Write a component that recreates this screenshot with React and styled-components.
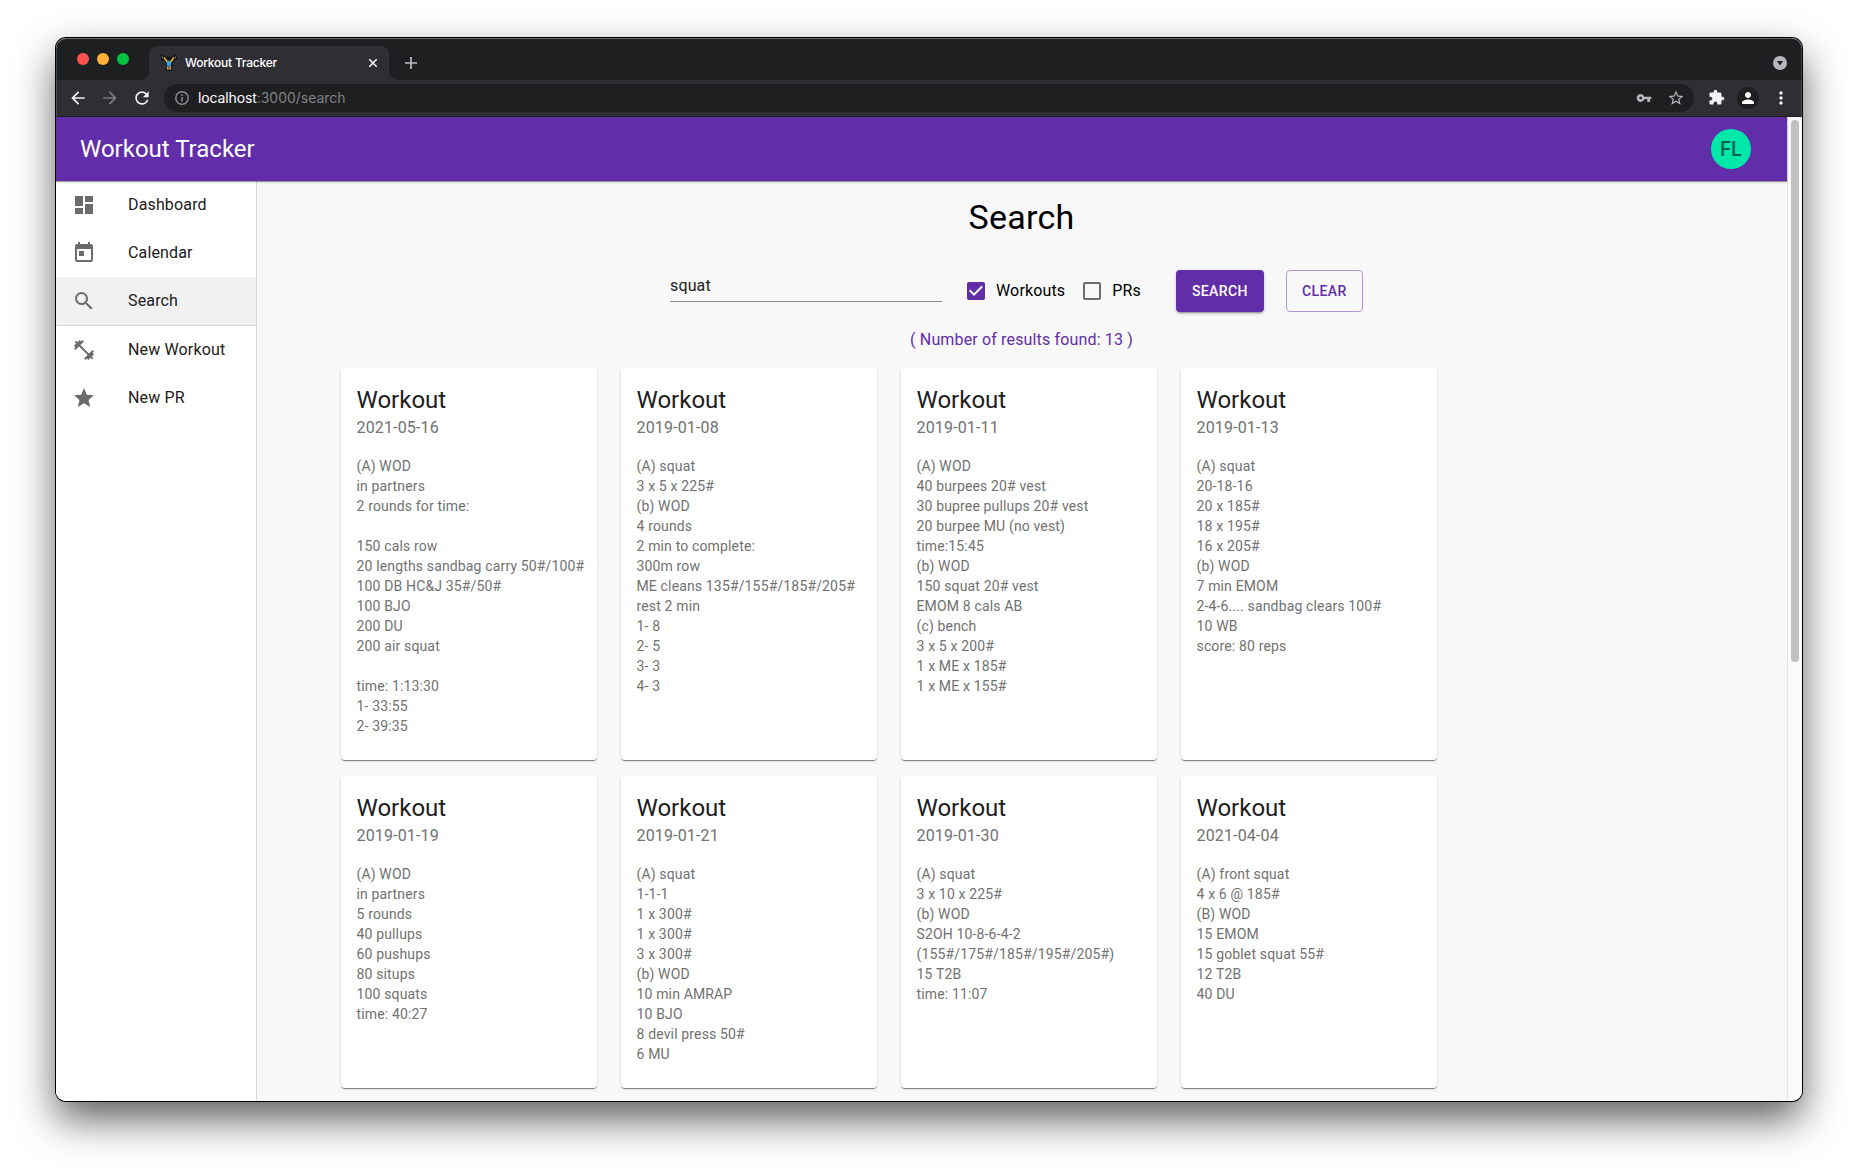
import React from "react";
import styled, { createGlobalStyle } from "styled-components";
import {
  MdDashboard,
  MdToday,
  MdSearch,
  MdFitnessCenter,
  MdStar,
  MdStarBorder,
  MdVpnKey,
  MdExtension,
  MdPerson,
  MdMoreVert,
  MdArrowBack,
  MdArrowForward,
  MdRefresh,
  MdCheckBox,
  MdCheckBoxOutlineBlank,
} from "react-icons/md";

const PURPLE = "#612da9";

const GlobalStyle = createGlobalStyle`
  *, *::before, *::after { box-sizing: border-box; }
  html, body { margin: 0; background: #fff; overflow: hidden; }
  body { font-family: Roboto, "Liberation Sans", sans-serif; -webkit-font-smoothing: antialiased; }
`;

const Desktop = styled.div`
  width: 1858px;
  height: 1175px;
  padding: 38px 56px 74px;
  background: #fff;
  overflow: hidden;
`;

const Window = styled.div`
  position: relative;
  display: flex;
  flex-direction: column;
  height: 1063px;
  border-radius: 10px;
  box-shadow: 0 0 0 1px #000, 0 18px 40px rgba(0, 0, 0, 0.64);
  &::after {
    content: "";
    position: absolute;
    inset: 0;
    border-radius: 10px;
    box-shadow: inset 0 1px 0 rgba(255, 255, 255, 0.2), inset 0 0 0 1px rgba(255, 255, 255, 0.16);
    pointer-events: none;
  }
`;

/* browser chrome */

const TabStrip = styled.div`
  display: flex;
  height: 42px;
  padding: 0 15px 0 21px;
  background: #1e1f21;
  border-radius: 10px 10px 0 0;
  font-family: Inter, "Liberation Sans", sans-serif;
`;

const Lights = styled.div`
  display: flex;
  gap: 8px;
  padding-top: 15px;
  width: 72px;
`;

const Light = styled.span`
  width: 12px;
  height: 12px;
  border-radius: 50%;
  background: ${(p) => p.$color};
`;

const Tab = styled.div`
  position: relative;
  display: flex;
  align-items: center;
  width: 240px;
  height: 34px;
  margin-top: 8px;
  padding: 0 10px 0 12px;
  background: #2f2e33;
  border-radius: 8px 8px 0 0;
  color: #fff;
  &::before,
  &::after {
    content: "";
    position: absolute;
    bottom: 0;
    width: 8px;
    height: 8px;
  }
  &::before {
    left: -8px;
    background: radial-gradient(circle at 0 0, transparent 7.5px, #2f2e33 8px);
  }
  &::after {
    right: -8px;
    background: radial-gradient(circle at 100% 0, transparent 7.5px, #2f2e33 8px);
  }
`;

const TabTitle = styled.span`
  flex: 1;
  margin-left: 8px;
  font-size: 12px;
  font-weight: 500;
  line-height: 16px;
  letter-spacing: -0.22px;
`;

const TabClose = styled.svg`
  width: 12px;
  height: 12px;
`;

const NewTab = styled.svg`
  width: 14px;
  height: 14px;
  margin: 18px 0 0 15px;
`;

const TabMenu = styled.svg`
  width: 14px;
  height: 14px;
  margin: 18px 0 0 auto;
`;

const Toolbar = styled.div`
  display: flex;
  align-items: center;
  height: 37px;
  padding: 0 11.5px 1px 12px;
  background: #2f2e33;
  border-bottom: 1px solid #1f1f22;
  color: #f1f2f4;
  font-family: Inter, "Liberation Sans", sans-serif;
`;

const NavButton = styled.span`
  display: flex;
  margin-right: 12px;
  color: ${(p) => (p.$muted ? "#7c7b80" : "#f1f2f4")};
`;

const Omnibox = styled.div`
  display: flex;
  align-items: center;
  flex: 1;
  height: 28px;
  padding: 0 9px 0 11px;
  background: #1e1f21;
  border-radius: 14px;
  color: #b4b5b8;
`;

const Url = styled.span`
  flex: 1;
  margin-left: 9px;
  font-size: 14px;
  line-height: 20px;
  letter-spacing: -0.03px;
  color: #818285;
`;

const Host = styled.span`
  color: #fff;
  letter-spacing: -0.12px;
`;

const OmniIcon = styled.span`
  display: flex;
  margin-left: ${(p) => p.$gap}px;
`;

const Extensions = styled.span`
  display: flex;
  margin: 0 12.5px 0 13.5px;
`;

const Profile = styled.span`
  display: flex;
  align-items: center;
  justify-content: center;
  width: 22px;
  height: 22px;
  border-radius: 50%;
  background: #1e1f21;
  color: #fff;
`;

const Kebab = styled.span`
  display: flex;
  margin-left: 11.5px;
`;

/* page */

const Viewport = styled.div`
  display: flex;
  flex: 1;
  min-height: 0;
  overflow: hidden;
  border-radius: 0 0 10px 10px;
`;

const Page = styled.div`
  display: flex;
  flex-direction: column;
  width: 1731px;
  background: #f8f8f8;
`;

const ScrollTrack = styled.div`
  width: 15px;
  padding: 3px 3px;
  background: #fafafa;
  border-left: 1px solid #e4e4e4;
`;

const ScrollThumb = styled.div`
  width: 8px;
  height: 542px;
  border-radius: 4px;
  background: #c1c1c1;
`;

const AppBar = styled.header`
  position: relative;
  z-index: 1;
  display: flex;
  align-items: center;
  justify-content: space-between;
  height: 64px;
  flex: none;
  padding: 0 36px 0 24px;
  background: ${PURPLE};
  box-shadow: 0 1px 1px rgba(0, 0, 0, 0.32), 0 1px 3px rgba(0, 0, 0, 0.12);
  color: #fff;
`;

const Brand = styled.div`
  font-size: 24px;
  line-height: 32px;
`;

const Avatar = styled.div`
  display: flex;
  align-items: center;
  justify-content: center;
  width: 40px;
  height: 40px;
  border-radius: 50%;
  background: #00e7aa;
  color: #036350;
  font-size: 20px;
  font-weight: 500;
  line-height: 20px;
`;

const Body = styled.div`
  display: flex;
  flex: 1;
  min-height: 0;
`;

const Sidebar = styled.nav`
  width: 201px;
  flex: none;
  background: #fff;
  border-right: 1px solid #d9d9d9;
`;

const NavItem = styled.div`
  display: flex;
  align-items: center;
  gap: 32px;
  height: ${(p) => (p.$divider ? 49 : 48)}px;
  padding: 0 16px;
  background: ${(p) => (p.$active ? "#f1f1f1" : "transparent")};
  border-bottom: ${(p) => (p.$divider ? "1px solid #d9d9d9" : "none")};
  color: #202020;
  font-size: 16px;
  line-height: 24px;
  letter-spacing: 0.00938em;
  svg {
    color: #6b6b6b;
  }
`;

const Main = styled.main`
  flex: 1;
  padding: 15px 0 0;
  overflow: hidden;
`;

const Heading = styled.h1`
  margin: 0;
  padding-right: 1px;
  text-align: center;
  font-size: 34px;
  font-weight: 400;
  line-height: 42px;
  letter-spacing: 0.00735em;
  color: #000;
`;

const SearchForm = styled.div`
  display: flex;
  align-items: center;
  height: 42px;
  margin-top: 32px;
  padding-left: 413px;
`;

const SearchField = styled.div`
  align-self: flex-start;
  width: 272px;
  height: 32px;
  margin-right: 22px;
  padding-top: 6px;
  border-bottom: 1px solid #8c8c8c;
  color: #202020;
  font-size: 16px;
  line-height: 19px;
  letter-spacing: 0.00938em;
`;

const CheckLabel = styled.label`
  display: flex;
  align-items: center;
  gap: 8px;
  margin-right: ${(p) => p.$gap}px;
  font-size: 16px;
  line-height: 24px;
  letter-spacing: 0.00938em;
  color: #000;
  svg {
    color: ${(p) => (p.$checked ? PURPLE : "#6d6d6d")};
  }
`;

const Button = styled.button`
  width: ${(p) => p.$width}px;
  height: 42px;
  margin: 0 22px 0 0;
  padding: 0;
  border: ${(p) => (p.$outlined ? "1px solid #b096d5" : "none")};
  border-radius: 4px;
  background: ${(p) => (p.$outlined ? "transparent" : PURPLE)};
  box-shadow: ${(p) =>
    p.$outlined
      ? "none"
      : "0 3px 1px -2px rgba(0,0,0,.2), 0 2px 2px 0 rgba(0,0,0,.14), 0 1px 5px 0 rgba(0,0,0,.12)"};
  color: ${(p) => (p.$outlined ? PURPLE : "#fff")};
  font-family: inherit;
  font-size: 14px;
  font-weight: 500;
  line-height: 24px;
  letter-spacing: 0.02857em;
`;

const ResultCount = styled.p`
  margin: 16px 0 0;
  padding-right: 1px;
  text-align: center;
  font-size: 16px;
  line-height: 24px;
  letter-spacing: 0.00938em;
  color: ${PURPLE};
`;

const CardGrid = styled.div`
  display: grid;
  grid-template-columns: repeat(4, 256px);
  gap: 16px 24px;
  margin: 16px 0 0 84px;
`;

const Card = styled.article`
  padding: 16px 0 24px 15.5px;
  border-radius: 4px;
  background: #fff;
  box-shadow: 0 2px 1px -1px rgba(0, 0, 0, 0.3), 0 1px 1px 0 rgba(0, 0, 0, 0.2),
    0 1px 3px 0 rgba(0, 0, 0, 0.12);
`;

const CardTitle = styled.h2`
  margin: 0;
  font-size: 24px;
  font-weight: 400;
  line-height: 32px;
  color: #202020;
`;

const CardDate = styled.div`
  font-size: 16px;
  line-height: 24px;
  letter-spacing: 0.00938em;
  color: #717171;
`;

const CardText = styled.div`
  margin-top: 16px;
  font-size: 14px;
  line-height: 20px;
  letter-spacing: 0.01071em;
  white-space: pre;
  color: #717171;
`;

const workouts = [
  {
    date: "2021-05-16",
    text: "(A) WOD\nin partners\n2 rounds for time:\n\n150 cals row\n20 lengths sandbag carry 50#/100#\n100 DB HC&J 35#/50#\n100 BJO\n200 DU\n200 air squat\n\ntime: 1:13:30\n1- 33:55\n2- 39:35",
  },
  {
    date: "2019-01-08",
    text: "(A) squat\n3 x 5 x 225#\n(b) WOD\n4 rounds\n2 min to complete:\n300m row\nME cleans 135#/155#/185#/205#\nrest 2 min\n1- 8\n2- 5\n3- 3\n4- 3",
  },
  {
    date: "2019-01-11",
    text: "(A) WOD\n40 burpees 20# vest\n30 bupree pullups 20# vest\n20 burpee MU (no vest)\ntime:15:45\n(b) WOD\n150 squat 20# vest\nEMOM 8 cals AB\n(c) bench\n3 x 5 x 200#\n1 x ME x 185#\n1 x ME x 155#",
  },
  {
    date: "2019-01-13",
    text: "(A) squat\n20-18-16\n20 x 185#\n18 x 195#\n16 x 205#\n(b) WOD\n7 min EMOM\n2-4-6.... sandbag clears 100#\n10 WB\nscore: 80 reps",
  },
  {
    date: "2019-01-19",
    text: "(A) WOD\nin partners\n5 rounds\n40 pullups\n60 pushups\n80 situps\n100 squats\ntime: 40:27",
  },
  {
    date: "2019-01-21",
    text: "(A) squat\n1-1-1\n1 x 300#\n1 x 300#\n3 x 300#\n(b) WOD\n10 min AMRAP\n10 BJO\n8 devil press 50#\n6 MU",
  },
  {
    date: "2019-01-30",
    text: "(A) squat\n3 x 10 x 225#\n(b) WOD\nS2OH 10-8-6-4-2\n(155#/175#/185#/195#/205#)\n15 T2B\ntime: 11:07",
  },
  {
    date: "2021-04-04",
    text: "(A) front squat\n4 x 6 @ 185#\n(B) WOD\n15 EMOM\n15 goblet squat 55#\n12 T2B\n40 DU",
  },
];

const navItems = [
  { label: "Dashboard", Icon: MdDashboard },
  { label: "Calendar", Icon: MdToday },
  { label: "Search", Icon: MdSearch, active: true, divider: true },
  { label: "New Workout", Icon: MdFitnessCenter },
  { label: "New PR", Icon: MdStar },
];

function LifterIcon() {
  return (
    <svg width="16" height="16" viewBox="0 0 16 16">
      <path d="M1 2.2h14" stroke="#111" strokeWidth="1" />
      <rect x="0" y="0.2" width="3" height="4.6" rx="1" fill="#0b0b0c" />
      <rect x="13" y="0.2" width="3" height="4.6" rx="1" fill="#0b0b0c" />
      <path d="M1 1.2l1 2.6M15 1.2l-1 2.6" stroke="#66686c" strokeWidth="1.1" />
      <path d="M2.8 2.5L6 6.8h4l3.2-4.3" fill="none" stroke="#0b0b0c" strokeWidth="3.2" />
      <rect x="4.7" y="5.5" width="6.6" height="10.3" rx="0.8" fill="#0b0b0c" />
      <path d="M3 2.6L6.1 6.6h3.8L13 2.6" fill="none" stroke="#e9b43c" strokeWidth="1.7" />
      <circle cx="8" cy="3.6" r="1.8" fill="#0b0b0c" />
      <rect x="5.8" y="6.2" width="4.4" height="4.6" fill="#35a7dc" />
      <path d="M5.8 11h4.4v3.8H8.3V12H7.7v2.8H5.8z" fill="#c99562" />
      <path d="M5.8 10.2h4.4v1.7H5.8z" fill="#4676b8" />
    </svg>
  );
}

function InfoIcon() {
  return (
    <svg width="14" height="14" viewBox="0 0 14 14" fill="none">
      <circle cx="7" cy="7" r="6.2" stroke="#8d8f94" strokeWidth="1.4" />
      <path d="M7 6.2v4.2M7 3.6v1.5" stroke="#8d8f94" strokeWidth="1.6" />
    </svg>
  );
}

export default function App() {
  return (
    <>
      <GlobalStyle />
      <Desktop>
        <Window>
          <TabStrip>
            <Lights>
              <Light $color="#ff5350" />
              <Light $color="#ffb236" />
              <Light $color="#00c440" />
            </Lights>
            <Tab>
              <LifterIcon />
              <TabTitle>Workout Tracker</TabTitle>
              <TabClose viewBox="0 0 12 12">
                <path d="M2.3 2.3l7.4 7.4M9.7 2.3L2.3 9.7" stroke="#f5f5f5" strokeWidth="1.6" />
              </TabClose>
            </Tab>
            <NewTab viewBox="0 0 14 14">
              <path d="M7 1v12M1 7h12" stroke="#bdbec1" strokeWidth="1.7" />
            </NewTab>
            <TabMenu viewBox="0 0 14 14">
              <circle cx="7" cy="7" r="7" fill="#b5b7bc" />
              <path d="M3.9 5h6.2L7 9.5z" fill="#1e1f21" />
            </TabMenu>
          </TabStrip>
          <Toolbar>
            <NavButton><MdArrowBack size={20} /></NavButton>
            <NavButton $muted><MdArrowForward size={20} /></NavButton>
            <NavButton><MdRefresh size={20} /></NavButton>
            <Omnibox>
              <InfoIcon />
              <Url>
                <Host>localhost</Host>:3000/search
              </Url>
              <OmniIcon $gap={0}><MdVpnKey size={16} /></OmniIcon>
              <OmniIcon $gap={15}><MdStarBorder size={18} /></OmniIcon>
            </Omnibox>
            <Extensions><MdExtension size={17} /></Extensions>
            <Profile><MdPerson size={18} /></Profile>
            <Kebab><MdMoreVert size={20} /></Kebab>
          </Toolbar>
          <Viewport>
            <Page>
              <AppBar>
                <Brand>Workout Tracker</Brand>
                <Avatar>FL</Avatar>
              </AppBar>
              <Body>
                <Sidebar>
                  {navItems.map(({ label, Icon, active, divider }) => (
                    <NavItem key={label} $active={active} $divider={divider}>
                      <Icon size={24} />
                      {label}
                    </NavItem>
                  ))}
                </Sidebar>
                <Main>
                  <Heading>Search</Heading>
                  <SearchForm>
                    <SearchField>squat</SearchField>
                    <CheckLabel $checked $gap={15}>
                      <MdCheckBox size={24} />
                      Workouts
                    </CheckLabel>
                    <CheckLabel $gap={35}>
                      <MdCheckBoxOutlineBlank size={24} />
                      PRs
                    </CheckLabel>
                    <Button $width={88}>SEARCH</Button>
                    <Button $width={77} $outlined>CLEAR</Button>
                  </SearchForm>
                  <ResultCount>( Number of results found: 13 )</ResultCount>
                  <CardGrid>
                    {workouts.map((w) => (
                      <Card key={w.date}>
                        <CardTitle>Workout</CardTitle>
                        <CardDate>{w.date}</CardDate>
                        <CardText>{w.text}</CardText>
                      </Card>
                    ))}
                  </CardGrid>
                </Main>
              </Body>
            </Page>
            <ScrollTrack>
              <ScrollThumb />
            </ScrollTrack>
          </Viewport>
        </Window>
      </Desktop>
    </>
  );
}
